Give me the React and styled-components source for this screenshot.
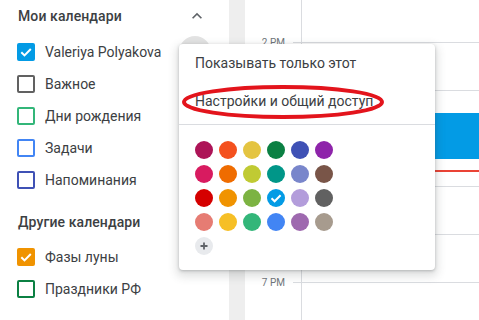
import React from "react";
import styled, { createGlobalStyle } from "styled-components";

const Global = createGlobalStyle`
  html, body { margin: 0; padding: 0; background: #fff; }
  body { font-family: Roboto, "Noto Sans", Arial, sans-serif; overflow: hidden; }
  * { box-sizing: border-box; }
`;

const Page = styled.div`
  position: relative;
  display: flex;
  width: 479px;
  height: 320px;
  overflow: hidden;
  background: #fff;
`;

const Sidebar = styled.aside`
  width: 229px;
  flex: none;
  display: flex;
  flex-direction: column;
`;

const SectionHeader = styled.div`
  height: 32px;
  display: flex;
  align-items: center;
  justify-content: space-between;
  padding: 0 22px 0 18px;
  margin-top: ${(p) => p.$gap || 0}px;
  margin-bottom: ${(p) => p.$after || 0}px;
  font-size: 14px;
  font-weight: 500;
  color: #3c4043;
  letter-spacing: 0.1px;
`;

const Chevron = styled.svg`
  width: 20px;
  height: 20px;
  fill: #5f6368;
  margin-top: -1px;
`;

const Row = styled.div`
  position: relative;
  height: 32px;
  display: flex;
  align-items: center;
  padding-left: 17px;
  font-size: 14px;
  color: #3c4043;
`;

const Box = styled.span`
  width: 18px;
  height: 18px;
  flex: none;
  border-radius: 2px;
  border: 2px solid ${(p) => p.$color};
  background: ${(p) => (p.$checked ? p.$color : "transparent")};
  margin-right: 10px;
  display: flex;
  align-items: center;
  justify-content: center;
`;

const HoverCircle = styled.span`
  position: absolute;
  right: 18px;
  top: 0;
  width: 32px;
  height: 32px;
  border-radius: 50%;
  background: #e3e3e3;
`;

const ScrollTrack = styled.div`
  width: 16px;
  flex: none;
  background: #eeeeee;
`;

const Grid = styled.div`
  flex: 1;
  display: flex;
`;

const Gutter = styled.div`
  width: 56px;
  flex: none;
  display: flex;
  flex-direction: column;
  gap: 34px;
  padding-top: 35px;
`;

const Mark = styled.div`
  height: 14px;
  display: flex;
  align-items: center;
`;

const TimeLabel = styled.span`
  width: 40px;
  text-align: right;
  font-size: 10px;
  color: #70757a;
  margin-right: 8px;
`;

const Tick = styled.span`
  flex: 1;
  height: 1px;
  background: #dadce0;
`;

const DayColumn = styled.div`
  position: relative;
  flex: 1;
  border-left: 1px solid #dadce0;
  display: flex;
  flex-direction: column;
`;

const HourCell = styled.div`
  flex: none;
  height: ${(p) => (p.$first ? 43 : 48)}px;
  border-bottom: 1px solid #dadce0;
`;

const Event = styled.div`
  position: absolute;
  top: 113px;
  left: 4px;
  right: -8px;
  height: 46px;
  border-radius: 4px;
  background: #039be5;
`;

const NowLine = styled.div`
  position: absolute;
  top: 170px;
  left: 0;
  right: 0;
  height: 2px;
  background: #ea4335;
`;

const Menu = styled.div`
  position: absolute;
  left: 179px;
  top: 44px;
  width: 256px;
  background: #fff;
  border-radius: 4px;
  padding-bottom: 15px;
  box-shadow: 0 4px 8px 3px rgba(60, 64, 67, 0.15), 0 1px 3px rgba(60, 64, 67, 0.3);
`;

const MenuItem = styled.div`
  height: 38px;
  display: flex;
  align-items: center;
  padding: 0 16px;
  font-size: 14px;
  color: #3c4043;
`;

const Divider = styled.div`
  height: 1px;
  background: #dadce0;
  margin: 4px 0 16px;
`;

const Palette = styled.div`
  display: grid;
  grid-template-columns: repeat(6, 18px);
  gap: 6px;
  padding: 0 16px;
`;

const Swatch = styled.span`
  width: 18px;
  height: 18px;
  border-radius: 50%;
  background: ${(p) => p.$color};
  display: flex;
  align-items: center;
  justify-content: center;
`;

const AddSwatch = styled(Swatch)`
  background: #e8eaed;
`;

const Annotation = styled.svg`
  position: absolute;
  left: 0;
  top: 0;
  width: 479px;
  height: 320px;
  pointer-events: none;
`;

const Check = () => (
  <svg width="18" height="18" viewBox="0 0 18 18">
    <polyline points="4.5,9.3 7.6,12.3 13.6,6.2" fill="none" stroke="#fff" strokeWidth="2" />
  </svg>
);

const BoxCheck = () => (
  <svg width="14" height="14" viewBox="2 2 14 14">
    <polyline points="4.3,9.2 7.5,12.4 13.8,6" fill="none" stroke="#fff" strokeWidth="2" />
  </svg>
);

const myCalendars = [
  { name: "Valeriya Polyakova", color: "#039be5", checked: true, hover: true },
  { name: "Важное", color: "#616161" },
  { name: "Дни рождения", color: "#33b679" },
  { name: "Задачи", color: "#4285f4" },
  { name: "Напоминания", color: "#3f51b5" },
];

const otherCalendars = [
  { name: "Фазы луны", color: "#f09300", checked: true },
  { name: "Праздники РФ", color: "#0b8043" },
];

const palette = [
  "#ad1457", "#f4511e", "#e4c441", "#0b8043", "#3f51b5", "#8e24aa",
  "#d81b60", "#ef6c00", "#c0ca33", "#009688", "#7986cb", "#795548",
  "#d50000", "#f09300", "#7cb342", "#039be5", "#b39ddb", "#616161",
  "#e67c73", "#f6bf26", "#33b679", "#4285f4", "#9e69af", "#a79b8e",
];

const hours = ["2 PM", "3 PM", "4 PM", "5 PM", "6 PM", "7 PM"];

const CalendarRow = ({ cal }) => (
  <Row>
    {cal.hover && <HoverCircle />}
    <Box $color={cal.color} $checked={cal.checked}>
      {cal.checked && <BoxCheck />}
    </Box>
    {cal.name}
  </Row>
);

export default function App() {
  return (
    <>
      <Global />
      <Page>
        <Sidebar>
          <SectionHeader $after={4}>
            Мои календари
            <Chevron viewBox="0 0 24 24">
              <path d="M7.41 15.41L12 10.83l4.59 4.58L18 14l-6-6-6 6z" />
            </Chevron>
          </SectionHeader>
          {myCalendars.map((c) => (
            <CalendarRow key={c.name} cal={c} />
          ))}
          <SectionHeader $gap={10} $after={3}>
            Другие календари
          </SectionHeader>
          {otherCalendars.map((c) => (
            <CalendarRow key={c.name} cal={c} />
          ))}
        </Sidebar>
        <ScrollTrack />
        <Grid>
          <Gutter>
            {hours.map((h) => (
              <Mark key={h}>
                <TimeLabel>{h}</TimeLabel>
                <Tick />
              </Mark>
            ))}
          </Gutter>
          <DayColumn>
            <HourCell $first />
            {[0, 1, 2, 3, 4, 5].map((i) => (
              <HourCell key={i} />
            ))}
            <Event />
            <NowLine />
          </DayColumn>
        </Grid>
        <Menu>
          <MenuItem>Показывать только этот</MenuItem>
          <MenuItem>Настройки и общий доступ</MenuItem>
          <Divider />
          <Palette>
            {palette.map((c) => (
              <Swatch key={c} $color={c}>
                {c === "#039be5" && <Check />}
              </Swatch>
            ))}
            <AddSwatch>
              <svg width="18" height="18" viewBox="0 0 18 18">
                <path d="M9 5.5v7M5.5 9h7" stroke="#5f6368" strokeWidth="1.8" />
              </svg>
            </AddSwatch>
          </Palette>
        </Menu>
        <Annotation viewBox="0 0 479 320">
          <ellipse cx="283" cy="102" rx="99" ry="15" fill="none" stroke="#e3141c" strokeWidth="4" />
        </Annotation>
      </Page>
    </>
  );
}
